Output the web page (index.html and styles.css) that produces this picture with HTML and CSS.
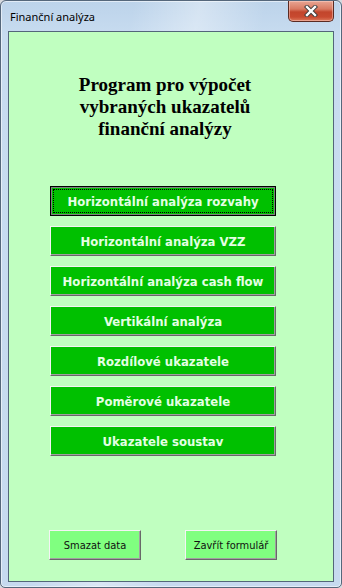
FILE: index.html
```html
<!DOCTYPE html>
<html lang="cs">
<head>
<meta charset="utf-8">
<title>Finanční analýza</title>
<link rel="stylesheet" href="styles.css">
</head>
<body>
<div class="window">
  <div class="titlebar">
    <span class="title">Finanční analýza</span>
    <button class="close" type="button" aria-label="Zavřít">
      <svg width="14" height="12" viewBox="0 0 14 12">
        <path d="M3 2 L11 10 M11 2 L3 10" stroke="#3a3a3a" stroke-width="4.2" stroke-linecap="square"/>
        <path d="M3 2 L11 10 M11 2 L3 10" stroke="#ffffff" stroke-width="2.4" stroke-linecap="square"/>
      </svg>
    </button>
  </div>
  <div class="client">
    <h1 class="heading">Program pro výpočet<br>vybraných ukazatelů<br>finanční analýzy</h1>
    <div class="menu">
      <button class="btn big focused" type="button">Horizontální analýza rozvahy</button>
      <button class="btn big" type="button">Horizontální analýza VZZ</button>
      <button class="btn big" type="button">Horizontální analýza cash flow</button>
      <button class="btn big" type="button">Vertikální analýza</button>
      <button class="btn big" type="button">Rozdílové ukazatele</button>
      <button class="btn big" type="button">Poměrové ukazatele</button>
      <button class="btn big" type="button">Ukazatele soustav</button>
    </div>
    <div class="footer">
      <button class="btn small" type="button">Smazat data</button>
      <button class="btn small" type="button">Zavřít formulář</button>
    </div>
  </div>
</div>
</body>
</html>
```
FILE: styles.css
```css
html, body {
  margin: 0;
  padding: 0;
  background: #d6d9de;
}

.window {
  box-sizing: border-box;
  width: 342px;
  height: 588px;
  border: 1px solid #55677b;
  border-radius: 6px 6px 5px 5px;
  padding: 0 7px 5px 7px;
  display: flex;
  flex-direction: column;
  background:
    linear-gradient(100deg, rgba(255,255,255,0) 30%, rgba(255,255,255,0.35) 45%, rgba(255,255,255,0) 60%),
    linear-gradient(180deg, #bcd3ea 0%, #c8dcf0 6%, #c6daef 100%);
  box-shadow: inset 0 0 0 1px rgba(255,255,255,0.55);
}

.titlebar {
  height: 30px;
  display: flex;
  align-items: flex-start;
  flex: none;
}

.title {
  font-family: "Noto Sans", "Open Sans", sans-serif;
  font-size: 11px;
  line-height: 16px;
  color: #000;
  padding: 8px 0 0 2px;
}

.close {
  margin-left: auto;
  width: 46px;
  height: 21px;
  padding: 0;
  border: 1px solid #5a2a22;
  border-top: none;
  border-radius: 0 0 5px 5px;
  background: linear-gradient(180deg, #e8a593 0%, #d97a62 40%, #c2452c 55%, #c84a30 80%, #dc7a5c 100%);
  box-shadow: inset 0 0 0 1px rgba(255,220,210,0.45);
  display: flex;
  align-items: center;
  justify-content: center;
}

.close svg {
  display: block;
}

.client {
  flex: 1;
  border: 1px solid #53667a;
  background: #c0ffc0;
  display: flex;
  flex-direction: column;
}

.heading {
  margin: 42px 0 0 0;
  padding: 0 12px 0 0;
  font-family: "Liberation Serif", "Times New Roman", serif;
  font-weight: bold;
  font-size: 19px;
  line-height: 22px;
  text-align: center;
  color: #000;
}

.menu {
  margin: 46px 0 0 41px;
  width: 226px;
  display: flex;
  flex-direction: column;
  gap: 10px;
}

.btn {
  box-sizing: border-box;
  height: 30px;
  padding: 0;
  border: 1px solid;
  border-color: #f4f4f4 #686868 #686868 #f4f4f4;
  box-shadow: inset -1px -1px 0 #a0a0a0;
  cursor: pointer;
}

.big {
  width: 226px;
  background: #00c000;
  color: #e4ffe4;
  font-family: "DejaVu Sans Condensed", "DejaVu Sans", sans-serif;
  font-weight: bold;
  font-size: 13px;
}

.big.focused {
  border-color: #000;
  box-shadow: inset 0 0 0 1px #7f7f7f;
  outline: 1px dotted #000;
  outline-offset: -4px;
}

.footer {
  margin-top: auto;
  padding: 0 0 21px 40px;
  display: flex;
  gap: 44px;
}

.small {
  width: 92px;
  background: #80ff80;
  color: #101010;
  font-family: "DejaVu Sans Condensed", "DejaVu Sans", sans-serif;
  font-size: 11px;
}
```
